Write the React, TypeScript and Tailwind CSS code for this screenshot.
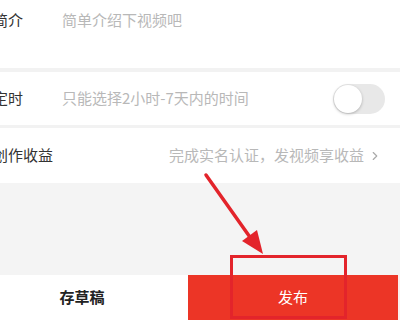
import { ChevronRight } from "lucide-react";

function Toggle() {
  return (
    <div className="w-[52px] h-[30px] rounded-full bg-[#e8e8e8] p-[1px] flex items-center">
      <div className="w-[28px] h-[28px] rounded-full bg-white shadow-[0_1px_3px_rgba(0,0,0,0.25)]" />
    </div>
  );
}

export default function App() {
  return (
    <div
      className="relative w-[400px] h-[320px] overflow-hidden bg-[#f4f4f4] flex flex-col"
      style={{ fontFamily: '"Noto Sans CJK SC", "Noto Sans", sans-serif' }}
    >
      {/* 简介 */}
      <div className="h-[68px] bg-white flex items-start pt-[9px]">
        <div className="-ml-[7px] w-[69px] text-[15px] text-[#333]">简介</div>
        <div className="text-[15px] text-[#b8b8b8]">简单介绍下视频吧</div>
      </div>
      <div className="h-[4px] bg-[#f2f2f2]" />

      {/* 定时 */}
      <div className="h-[53px] bg-white flex items-center">
        <div className="-ml-[7px] w-[69px] text-[15px] text-[#333]">定时</div>
        <div className="flex-1 text-[15px] text-[#b8b8b8]">只能选择2小时-7天内的时间</div>
        <div className="mr-[15px]">
          <Toggle />
        </div>
      </div>
      <div className="h-[3px] bg-[#f2f2f2]" />

      {/* 创作收益 */}
      <div className="h-[55px] bg-white flex items-center">
        <div className="-ml-[7px] text-[15px] text-[#333]">创作收益</div>
        <div className="flex-1" />
        <div className="text-[15px] text-[#b8b8b8]">完成实名认证，发视频享收益</div>
        <ChevronRight className="ml-[4px] mr-[18px] text-[#aaa]" size={14} strokeWidth={2} />
      </div>

      <div className="flex-1" />

      {/* bottom bar */}
      <div className="h-[45px] flex bg-white">
        <div className="w-[188px] flex items-center justify-center pr-6 text-[15px] font-bold text-[#222]">
          存草稿
        </div>
        <div className="w-[210px] bg-[#ec3526] flex items-center justify-center text-[15px] text-white">
          发布
        </div>
        <div className="flex-1 bg-[#fbeeee]" />
      </div>

      {/* annotation */}
      <svg className="absolute left-0 top-0 pointer-events-none" width="400" height="320">
        <line x1="206" y1="175" x2="252" y2="240" stroke="#e3242b" strokeWidth="3.5" strokeLinecap="round" />
        <polygon points="263,254 242,241 257,230" fill="#e3242b" />
        <rect x="231.5" y="256.5" width="114" height="61" fill="none" stroke="#e3242b" strokeWidth="3" />
      </svg>
    </div>
  );
}
